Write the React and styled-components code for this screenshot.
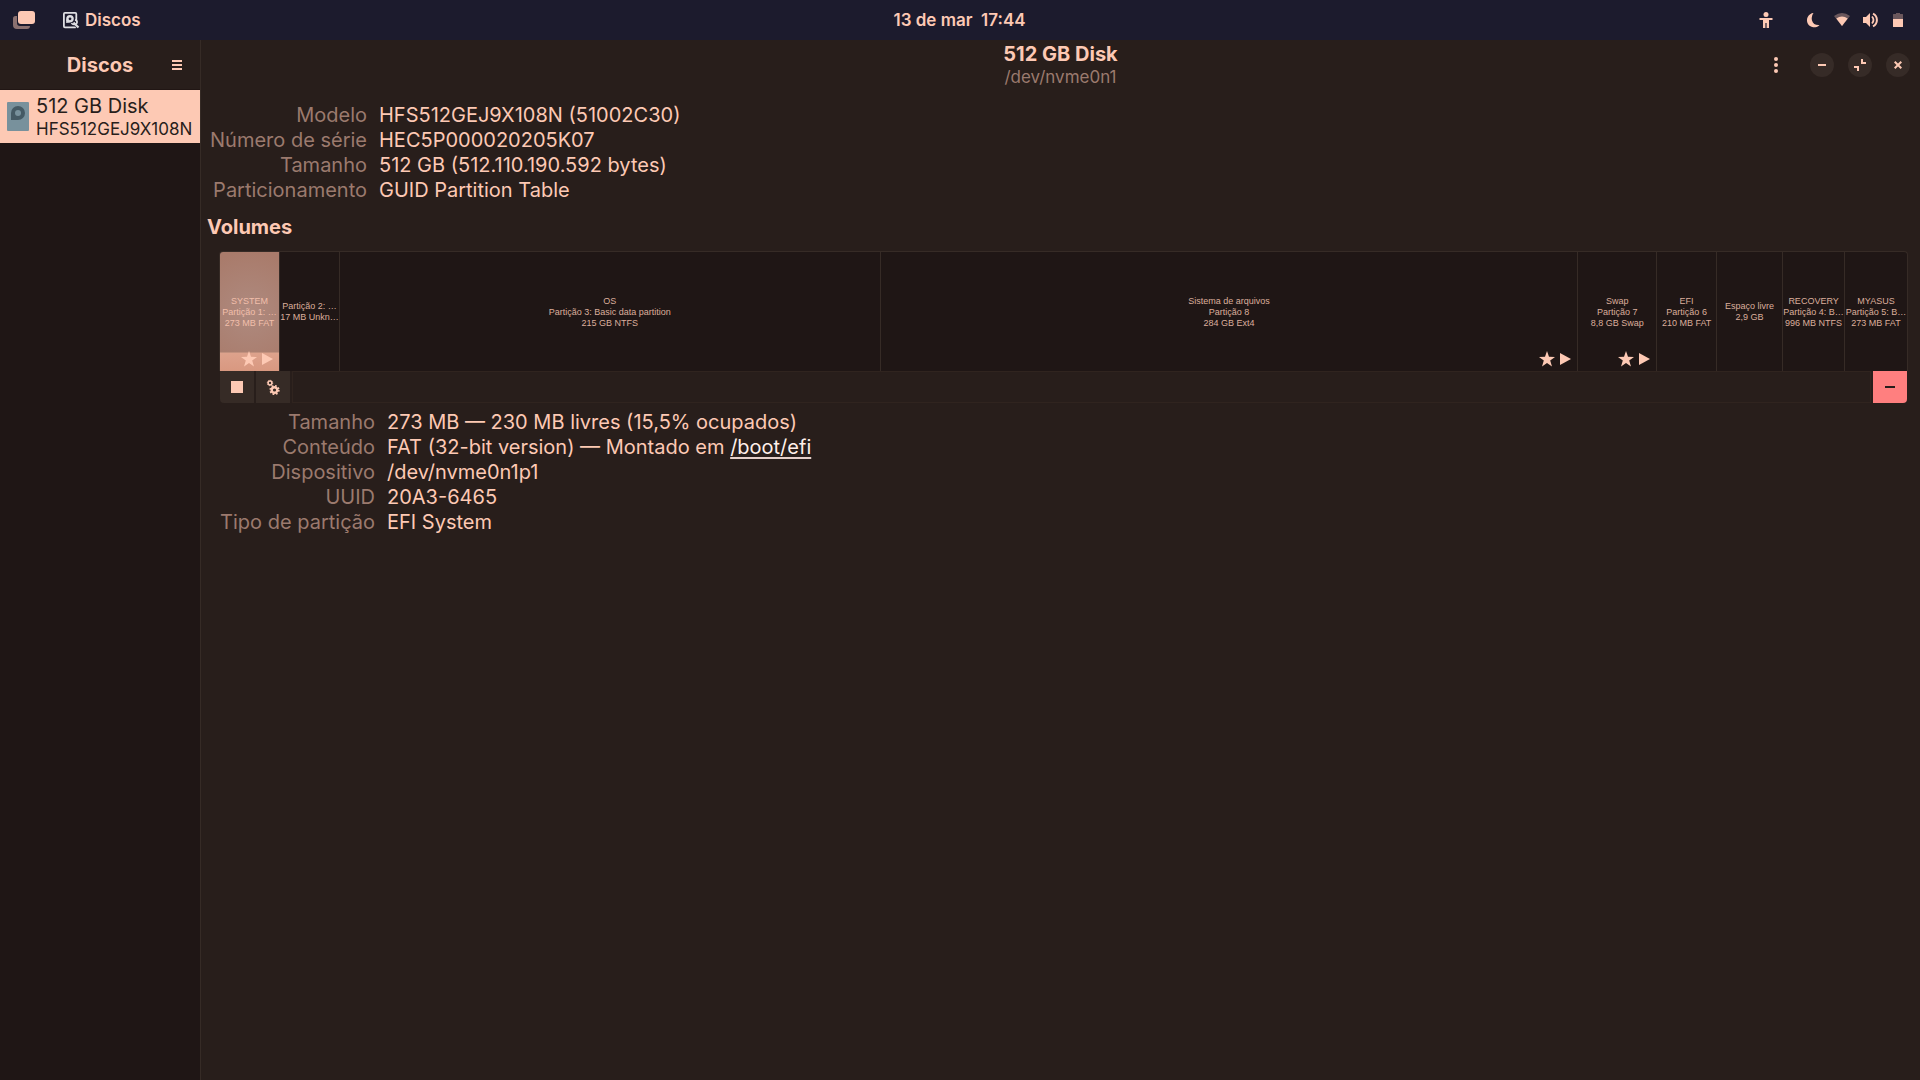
import React from "react";
import styled, { createGlobalStyle, css } from "styled-components";

const peach = "#fdc9b4";
const muted = "#9b7a6e";
const line = "#362b26";

const Global = createGlobalStyle`
  *, *::before, *::after { box-sizing: border-box; }
  html, body, #root { height: 100%; }
  body {
    margin: 0;
    background: #281e1b;
    color: ${peach};
    font-family: Inter, "Noto Sans", sans-serif;
    font-size: 20px;
    line-height: 25px;
  }
  h1, h2, p, dl, dd, dt, ul { margin: 0; padding: 0; }
  button { font: inherit; color: inherit; border: 0; padding: 0; background: none; cursor: pointer; }
  svg { display: block; }
`;

const Desktop = styled.div`
  display: flex;
  flex-direction: column;
  min-height: 100%;
`;

const TopBar = styled.header`
  display: grid;
  grid-template-columns: 1fr auto 1fr;
  align-items: center;
  height: 40px;
  padding: 0 14px 0 13px;
  background: #1c1b2d;
  font-size: 17px;
  line-height: 20px;
`;

const BarGroup = styled.div`
  display: flex;
  align-items: center;
  gap: ${(p) => p.$gap}px;
  justify-content: ${(p) => (p.$end ? "flex-end" : "flex-start")};
`;

const BarButton = styled.button`
  display: flex;
  align-items: center;
  gap: 5px;
  font-weight: 600;
`;

const Clock = styled.button`
  font-weight: 600;
  white-space: pre;
`;

const StatusMenu = styled.button`
  display: flex;
  align-items: center;
  gap: 12px;
`;

const Window = styled.main`
  display: flex;
  flex: 1;
`;

const Sidebar = styled.aside`
  display: flex;
  flex-direction: column;
  width: 201px;
  flex: none;
  background: #1f1615;
  border-right: 1px solid ${line};
`;

const SideHeader = styled.div`
  display: grid;
  grid-template-columns: 1fr 40px;
  align-items: center;
  height: 50px;
  padding: 1px 3px 0 43px;
  background: #281e1b;
  border-bottom: 1px solid #211614;
`;

const Title = styled.h1`
  font-size: 20px;
  line-height: 25px;
  font-weight: 700;
  text-align: center;
`;

const IconButton = styled.button`
  display: grid;
  place-items: center;
  width: 24px;
  height: 24px;
  justify-self: center;
  ${(p) =>
    p.$round &&
    css`
      border-radius: 50%;
      background: #362b27;
    `}
`;

const DriveRow = styled.button`
  display: flex;
  align-items: center;
  gap: 7px;
  height: 53px;
  padding: 0 7px;
  background: ${peach};
  color: #281e1b;
  text-align: left;
`;

const DriveName = styled.span`
  display: block;
  line-height: 24px;
`;

const DriveModel = styled.span`
  display: block;
  font-size: 17px;
  line-height: 22px;
`;

const Content = styled.section`
  display: flex;
  flex-direction: column;
  flex: 1;
  min-width: 0;
`;

const Header = styled.div`
  display: grid;
  grid-template-columns: 1fr auto 1fr;
  align-items: center;
  height: 50px;
  padding: 0 10px;
`;

const HeaderTitles = styled.div`
  grid-column: 2;
  padding-bottom: 1px;
  text-align: center;
`;

const Subtitle = styled.p`
  font-size: 17px;
  line-height: 20px;
  color: ${muted};
`;

const Controls = styled.div`
  display: flex;
  align-items: center;
  justify-content: flex-end;
  gap: 14px;
`;

const MenuSlot = styled.div`
  padding-right: 8px;
`;

const Body = styled.div`
  padding: 13px 12px 12px 6px;
`;

const Facts = styled.dl`
  display: grid;
  grid-template-columns: ${(p) => p.$label}px 1fr;
  column-gap: 12px;
  dt { color: ${muted}; text-align: right; white-space: nowrap; }
`;

const SectionTitle = styled.h2`
  margin: 12px 0 11px;
  font-size: 20px;
  line-height: 25px;
  font-weight: 700;
`;

const Volumes = styled.div`
  padding-left: 12px;
`;

const Grid = styled.div`
  display: flex;
  height: 120px;
  border: 1px solid ${line};
  border-bottom: 0;
  border-radius: 4px 4px 0 0;
  background: #1f1615;
`;

const Cell = styled.button`
  position: relative;
  display: flex;
  flex-direction: column;
  align-items: center;
  justify-content: center;
  flex: ${(p) => p.$share} ${(p) => p.$share} 0;
  min-width: 0;
  height: 100%;
  padding-top: 1px;
  color: #dcae9c;
  font-family: "Liberation Sans", Arial, sans-serif;
  font-size: 9px;
  line-height: 11px;
  white-space: nowrap;
  border-right: 1px solid ${line};
  &:first-child { border-top-left-radius: 3px; }
  &:last-child { border-right: 0; }
  ${(p) =>
    p.$selected &&
    css`
      color: #f2bfab;
      background:
        linear-gradient(#c2917e, #c2917e) 0 100px / 100% 1px no-repeat,
        linear-gradient(#dda28c, #d8977f) 0 101px / 100% 20px no-repeat,
        radial-gradient(circle at 50% 50%, #ae8a7f 0, #a97b6b 60px);
    `}
`;

const CellLine = styled.span`
  display: block;
`;

const Marks = styled.span`
  position: absolute;
  right: 6px;
  bottom: 4px;
  display: flex;
  align-items: center;
  gap: 5px;
  color: ${peach};
`;

const Toolbar = styled.div`
  display: flex;
  gap: 2px;
  height: 32px;
  padding: 0 1px;
`;

const Tool = styled.button`
  display: grid;
  place-items: center;
  width: 34px;
  height: 32px;
  background: ${(p) => (p.$danger ? "#ff7f7f" : "#362b26")};
  color: ${(p) => (p.$danger ? "#281e1b" : peach)};
  border-radius: ${(p) => p.$corner || "0"};
`;

const ToolSpace = styled.div`
  flex: 1;
  border: 1px solid #30241f;
`;

const Details = styled.div`
  padding-top: 7px;
`;

const MountLink = styled.a`
  color: #fff0ea;
  text-decoration: underline;
  text-decoration-thickness: 2px;
  text-decoration-color: #e5cfc9;
  text-decoration-skip-ink: none;
  text-underline-offset: 3px;
`;

const Star = () => (
  <svg width="16" height="16" viewBox="0 0 16 16" fill="currentColor">
    <path d="M8 0l2 5.800 6 .2-4.800 3.600L13 15.500 8 12l-5 3.500 1.800-5.900L0 6l6-.2z" />
  </svg>
);

const Play = () => (
  <svg width="11" height="12" viewBox="0 0 11 12" fill="currentColor">
    <path d="M0 0l11 6L0 12z" />
  </svg>
);

const Gears = () => (
  <svg width="16" height="16" viewBox="0 0 16 16" fill="none" stroke="currentColor">
    <circle cx="5" cy="4" r="1.900" strokeWidth="1.500" />
    <circle cx="5" cy="4" r="2.700" strokeWidth="1" strokeDasharray="1.060 1.060" />
    <circle cx="9.500" cy="11" r="2.800" strokeWidth="2.400" />
    <circle cx="9.500" cy="11" r="4.300" strokeWidth="1.700" strokeDasharray="1.690 1.690" />
  </svg>
);

const Person = () => (
  <svg width="16" height="16" viewBox="0 0 16 16" fill={peach}>
    <circle cx="8" cy="2.500" r="2.500" />
    <path d="M1.500 6h13v2H11v8H8.600v-5H7.400v5H5V8H1.500z" />
  </svg>
);

const Moon = () => (
  <svg width="16" height="16" viewBox="0 0 16 16" fill={peach}>
    <path d="M7.500 1A7.200 7.200 0 1 0 13.500 13Q7.500 13.500 6 8.500 5 4 7.500 1z" />
  </svg>
);

const Wifi = () => (
  <svg width="16" height="16" viewBox="0 0 16 16" fill={peach}>
    <path d="M0 4Q8-2 16 4L8 14z" opacity=".35" />
    <path d="M2.300 6.600Q8 2.500 13.700 6.600L8 14z" />
  </svg>
);

const Volume = () => (
  <svg width="16" height="16" viewBox="0 0 16 16" fill={peach}>
    <path d="M1 5h3l4-4v14l-4-4H1z" />
    <path d="M10 4.500q3 3.500 0 7" fill="none" stroke={peach} strokeWidth="1.800" />
    <path d="M11 1.700q3.900 2 3.900 6.300t-3.900 6.300" fill="none" stroke={peach} strokeWidth="2" />
  </svg>
);

const Battery = () => (
  <svg width="16" height="16" viewBox="0 0 16 16" fill={peach}>
    <path d="M3 2.500q0-.5.500-.5H6V1h4v1h2.500q.5 0 .5.500V7H3z" opacity=".35" />
    <path d="M3 7h10v7.500q0 .5-.5.500h-9q-.5 0-.5-.5z" />
  </svg>
);

const DiskTool = () => (
  <svg width="17" height="17" viewBox="0 0 17 17" fill="none">
    <rect x=".9" y=".9" width="12.400" height="14.400" rx="1" stroke="#dedee2" strokeWidth="1.800" />
    <path d="M10.500 9.500l5.500 6.500" stroke="#1c1b2d" strokeWidth="4" />
    <circle cx="7" cy="6.800" r="2.600" stroke="#dedee2" strokeWidth="2.400" />
    <path d="M3.200 11V7L7 10.500z" fill="#dedee2" />
    <path d="M10.500 10.500l5 5" stroke="#dedee2" strokeWidth="2.200" />
    <path d="M12 7.800q2.300.5 2 2.700-.3 2-3 2-1.800 0-2.500-1.500" stroke="#dedee2" strokeWidth="1.700" />
  </svg>
);

const partitions = [
  { share: 59, lines: ["SYSTEM", "Partição 1: …", "273 MB FAT"], mounted: true, selected: true },
  { share: 59, lines: ["Partição 2: …", "17 MB Unkn…"] },
  { share: 540, lines: ["OS", "Partição 3: Basic data partition", "215 GB NTFS"] },
  { share: 697, lines: ["Sistema de arquivos", "Partição 8", "284 GB Ext4"], mounted: true },
  { share: 78, lines: ["Swap", "Partição 7", "8,8 GB Swap"], mounted: true },
  { share: 59, lines: ["EFI", "Partição 6", "210 MB FAT"] },
  { share: 65, lines: ["Espaço livre", "2,9 GB"] },
  { share: 61, lines: ["RECOVERY", "Partição 4: B…", "996 MB NTFS"] },
  { share: 62, lines: ["MYASUS", "Partição 5: B…", "273 MB FAT"] },
];

const Fact = ({ label, children }) => (
  <>
    <dt>{label}</dt>
    <dd>{children}</dd>
  </>
);

export default function App() {
  return (
    <>
      <Global />
      <Desktop>
        <TopBar>
          <BarGroup $gap={28}>
            <BarButton aria-label="Atividades">
              <svg width="22" height="18" viewBox="0 0 22 18">
                <path d="M0 7.500Q0 5 2.500 5H4v7q0 3 3 3h10q0 3-3 3H4q-4 0-4-4z" fill="#8b7170" />
                <rect x="5" y="0" width="17" height="13" rx="3" fill={peach} />
              </svg>
            </BarButton>
            <BarButton>
              <DiskTool />
              Discos
            </BarButton>
          </BarGroup>
          <Clock>13 de mar  17:44</Clock>
          <BarGroup $gap={32} $end>
            <BarButton aria-label="Acessibilidade"><Person /></BarButton>
            <StatusMenu aria-label="Sistema">
              <Moon />
              <Wifi />
              <Volume />
              <Battery />
            </StatusMenu>
          </BarGroup>
        </TopBar>
        <Window>
          <Sidebar>
            <SideHeader>
              <Title>Discos</Title>
              <IconButton aria-label="Menu">
                <svg width="10" height="10" fill={peach}>
                  <path d="M0 0h10v2H0zM0 4h10v2H0zM0 8h10v2H0z" />
                </svg>
              </IconButton>
            </SideHeader>
            <DriveRow>
              <svg width="22" height="29" viewBox="0 0 22 29">
                <rect width="22" height="29" rx="1" fill="#78919c" />
                <path d="M4 18v-7a7 7 0 1 1 7 7z" fill="#455a64" />
                <circle cx="11" cy="11" r="3" fill="#78919c" />
              </svg>
              <span>
                <DriveName>512 GB Disk</DriveName>
                <DriveModel>HFS512GEJ9X108N</DriveModel>
              </span>
            </DriveRow>
          </Sidebar>
          <Content>
            <Header>
              <HeaderTitles>
                <Title as="h2">512 GB Disk</Title>
                <Subtitle>/dev/nvme0n1</Subtitle>
              </HeaderTitles>
              <Controls>
                <MenuSlot>
                  <IconButton aria-label="Opções">
                    <svg width="4" height="16" fill={peach}>
                      <circle cx="2" cy="2" r="2" />
                      <circle cx="2" cy="8" r="2" />
                      <circle cx="2" cy="14" r="2" />
                    </svg>
                  </IconButton>
                </MenuSlot>
                <IconButton $round aria-label="Minimizar">
                  <svg width="8" height="2" fill={peach}><path d="M0 0h8v2H0z" /></svg>
                </IconButton>
                <IconButton $round aria-label="Restaurar">
                  <svg width="12" height="12" fill={peach}><path d="M7 0h2v3h3v2H7zM0 7h5v5H3V9H0z" /></svg>
                </IconButton>
                <IconButton $round aria-label="Fechar">
                  <svg width="8" height="8" stroke={peach} strokeWidth="2"><path d="M.700.700l6.600 6.600M7.300.700L.700 7.300" /></svg>
                </IconButton>
              </Controls>
            </Header>
            <Body>
              <Facts $label={160}>
                <Fact label="Modelo">HFS512GEJ9X108N (51002C30)</Fact>
                <Fact label="Número de série">HEC5P000020205K07</Fact>
                <Fact label="Tamanho">512 GB (512.110.190.592 bytes)</Fact>
                <Fact label="Particionamento">GUID Partition Table</Fact>
              </Facts>
              <SectionTitle>Volumes</SectionTitle>
              <Volumes>
                <Grid>
                  {partitions.map((p) => (
                    <Cell key={p.lines.join()} $share={p.share} $selected={p.selected}>
                      {p.lines.map((t) => <CellLine key={t}>{t}</CellLine>)}
                      {p.mounted && <Marks><Star /><Play /></Marks>}
                    </Cell>
                  ))}
                </Grid>
                <Toolbar>
                  <Tool $corner="0 0 0 4px" aria-label="Desmontar">
                    <svg width="12" height="12" fill="currentColor"><path d="M0 0h12v12H0z" /></svg>
                  </Tool>
                  <Tool aria-label="Opções da partição"><Gears /></Tool>
                  <ToolSpace />
                  <Tool $danger $corner="0 0 4px 0" aria-label="Excluir partição">
                    <svg width="10" height="2" fill="currentColor"><path d="M0 0h10v2H0z" /></svg>
                  </Tool>
                </Toolbar>
                <Details>
                  <Facts $label={156}>
                    <Fact label="Tamanho">273 MB — 230 MB livres (15,5% ocupados)</Fact>
                    <Fact label="Conteúdo">
                      FAT (32-bit version) — Montado em <MountLink href="#efi">/boot/efi</MountLink>
                    </Fact>
                    <Fact label="Dispositivo">/dev/nvme0n1p1</Fact>
                    <Fact label="UUID">20A3-6465</Fact>
                    <Fact label="Tipo de partição">EFI System</Fact>
                  </Facts>
                </Details>
              </Volumes>
            </Body>
          </Content>
        </Window>
      </Desktop>
    </>
  );
}
